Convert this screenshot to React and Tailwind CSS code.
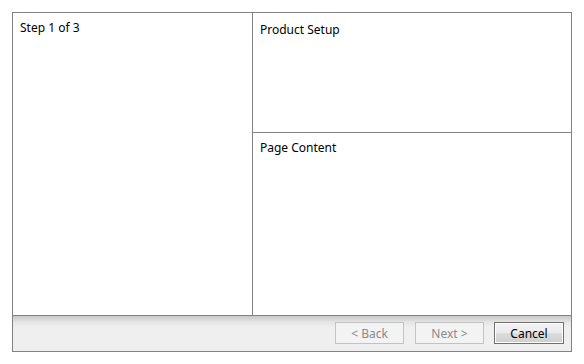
function WizardButton({ label, disabled }) {
  if (disabled) {
    return (
      <button
        type="button"
        disabled
        className="w-[69px] h-[22px] border border-[#c3c3c3] bg-[#f3f3f3] text-[#8a8a8a] text-[12px] leading-none pt-[1px]"
      >
        {label}
      </button>
    );
  }
  return (
    <button
      type="button"
      className="w-[70px] h-[22px] border border-[#707070] p-0 text-black text-[12px] leading-none"
    >
      <div className="w-full h-full border border-white bg-[linear-gradient(to_bottom,#f2f2f2_0%,#ebebeb_50%,#dddddd_51%,#cfcfcf_100%)] flex items-center justify-center pt-[1px]">
        {label}
      </div>
    </button>
  );
}

export default function App() {
  return (
    <div className="w-[584px] h-[364px] bg-white pt-[12px] pl-[12px] font-['Noto_Sans',sans-serif] text-[12px] text-black">
      <div className="w-[560px] h-[340px] border border-[#828282] flex flex-col">
        <div className="flex h-[302px]">
          <div className="w-[240px] border-r border-[#828282] px-[7px] pt-[6px]">
            Step 1 of 3
          </div>
          <div className="flex-1 flex flex-col">
            <div className="h-[120px] border-b border-[#828282] px-[7px] pt-[8px]">
              Product Setup
            </div>
            <div className="flex-1 px-[7px] pt-[6px]">Page Content</div>
          </div>
        </div>
        <div className="flex-1 border-t border-[#828282] bg-[linear-gradient(to_bottom,#c8c8c8_0px,#e4e4e4_6px,#efefef_11px,#efefef_100%)] flex justify-end items-start pt-[6px] pr-[7px]">
          <div className="flex gap-[11px]">
            <WizardButton label="< Back" disabled />
            <WizardButton label="Next >" disabled />
          </div>
          <div className="ml-[10px]">
            <WizardButton label="Cancel" />
          </div>
        </div>
      </div>
    </div>
  );
}
